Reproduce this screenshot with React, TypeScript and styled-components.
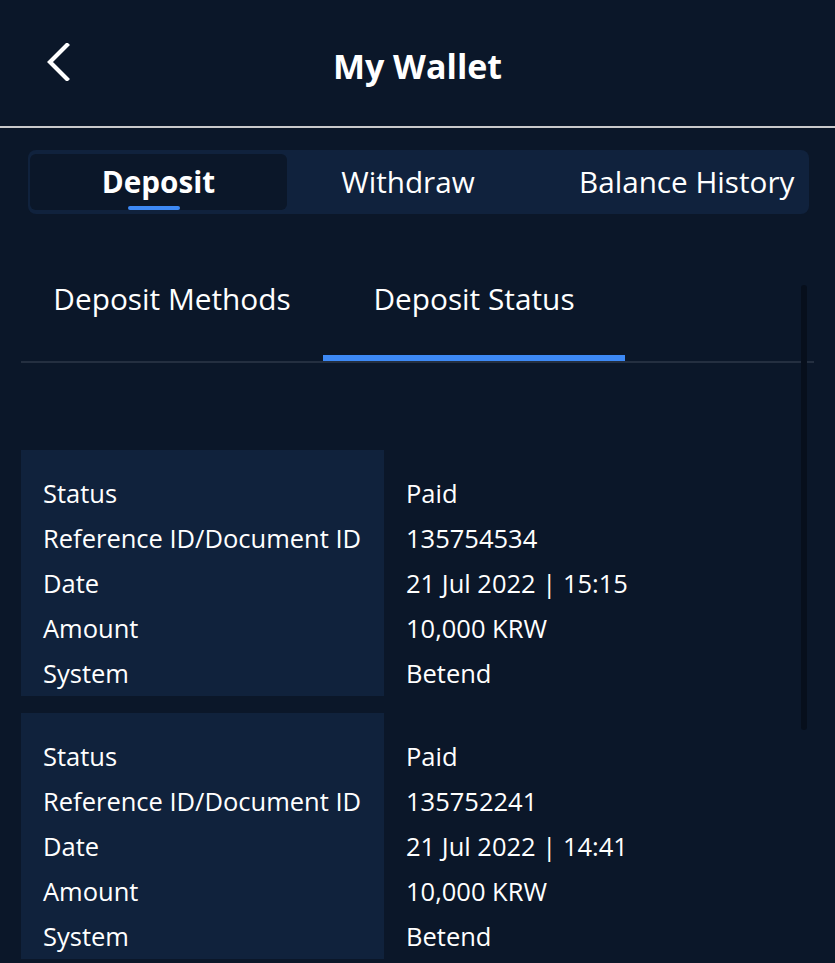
import React, {useState} from "react";
import styled, {createGlobalStyle} from "styled-components";

const GlobalStyle = createGlobalStyle`
    html, body {
        margin: 0;
        padding: 0;
        background-color: #0b1729;
    }
    body {
        font-family: "Open Sans", "Noto Sans", sans-serif;
        color: #ffffff;
    }
    * {
        box-sizing: border-box;
    }
`

type Deposit = {
    status: string
    reference: string
    date: string
    amount: string
    system: string
}

const deposits: Deposit[] = [
    {status: 'Paid', reference: '135754534', date: '21 Jul 2022 | 15:15', amount: '10,000 KRW', system: 'Betend'},
    {status: 'Paid', reference: '135752241', date: '21 Jul 2022 | 14:41', amount: '10,000 KRW', system: 'Betend'},
]

const labels = ['Status', 'Reference ID/Document ID', 'Date', 'Amount', 'System']

const App: React.FC = () => {
    const [mainTab, setMainTab] = useState('deposit')
    const [subTab, setSubTab] = useState('status')

    return (
        <Wrapper>
            <GlobalStyle/>
            <Header>
                <BackButton aria-label="back">
                    <svg width="24" height="38" viewBox="0 0 24 38" fill="none">
                        <polyline points="21,2 4,19 21,36" stroke="#ffffff" strokeWidth="4.2" strokeLinejoin="miter" strokeLinecap="square"/>
                    </svg>
                </BackButton>
                <Title>My Wallet</Title>
            </Header>
            <Divider/>
            <Segmented>
                <SegTab $active={mainTab === 'deposit'} onClick={() => setMainTab('deposit')}>Deposit</SegTab>
                <SegTab $active={mainTab === 'withdraw'} onClick={() => setMainTab('withdraw')}>Withdraw</SegTab>
                <SegTab $active={mainTab === 'history'} $offset={50} onClick={() => setMainTab('history')}>Balance History</SegTab>
            </Segmented>
            <Content>
                <ScrollThumb/>
                <SubTabs>
                    <SubTab $active={subTab === 'methods'} onClick={() => setSubTab('methods')}>Deposit Methods</SubTab>
                    <SubTab $active={subTab === 'status'} onClick={() => setSubTab('status')}>Deposit Status</SubTab>
                </SubTabs>
                <CardList>
                    {deposits.map((d) => (
                        <Card key={d.reference}>
                            <LabelCol>
                                {labels.map((l) => <Row key={l}>{l}</Row>)}
                            </LabelCol>
                            <ValueCol>
                                <Row>{d.status}</Row>
                                <Row>{d.reference}</Row>
                                <Row>{d.date}</Row>
                                <Row>{d.amount}</Row>
                                <Row>{d.system}</Row>
                            </ValueCol>
                        </Card>
                    ))}
                </CardList>
            </Content>
        </Wrapper>
    )
}

export default App

const Wrapper = styled.div`
    width: 835px;
    min-height: 963px;
    background-color: #0b1729;
`

const Header = styled.div`
    height: 126px;
    display: flex;
    align-items: center;
    justify-content: center;
    position: relative;
`

const BackButton = styled.button`
    position: absolute;
    left: 46px;
    top: 43px;
    padding: 0;
    border: none;
    background: none;
    display: flex;
    cursor: pointer;
`

const Title = styled.h1`
    margin: 5px 0 0 0;
    font-size: 34px;
    font-weight: 700;
    color: #ffffff;
`

const Divider = styled.div`
    height: 2px;
    background-color: #c9c9cb;
`

const Segmented = styled.div`
    margin: 22px 26px 0 28px;
    height: 64px;
    padding: 4px 2px;
    display: grid;
    grid-template-columns: 257px 242px 1fr;
    background-color: #10223d;
    border-radius: 8px;
`

const SegTab = styled.div<{$active: boolean, $offset?: number}>`
    position: relative;
    display: flex;
    align-items: center;
    justify-content: ${(p) => p.$offset ? 'flex-start' : 'center'};
    padding-left: ${(p) => p.$offset ? `${p.$offset}px` : '0'};
    padding-bottom: 2px;
    font-size: 29.7px;
    font-weight: ${(p) => p.$active ? 700 : 400};
    white-space: nowrap;
    border-radius: 6px;
    background-color: ${(p) => p.$active ? '#0b1729' : 'transparent'};
    cursor: pointer;
    &::after {
        content: '';
        display: ${(p) => p.$active ? 'block' : 'none'};
        position: absolute;
        left: 98px;
        bottom: 0;
        width: 52px;
        height: 4px;
        border-radius: 2px;
        background-color: #3d89f5;
    }
`

const Content = styled.div`
    position: relative;
    padding: 50px 21px 0 21px;
`

const ScrollThumb = styled.div`
    position: absolute;
    top: 71px;
    right: 28px;
    width: 6px;
    height: 445px;
    border-radius: 3px;
    background-color: #070f1c;
`

const SubTabs = styled.div`
    display: flex;
    border-bottom: 2px solid #242f40;
`

const SubTab = styled.div<{$active: boolean}>`
    width: 302px;
    height: 97px;
    padding-top: 15px;
    text-align: center;
    font-size: 29.8px;
    line-height: 40px;
    color: #ffffff;
    border-bottom: 6px solid ${(p) => p.$active ? '#3d89f5' : 'transparent'};
    cursor: pointer;
`

const CardList = styled.div`
    margin-top: 87px;
    display: flex;
    flex-direction: column;
    gap: 17px;
`

const Card = styled.div`
    display: flex;
`

const LabelCol = styled.div`
    width: 363px;
    padding: 21px 0 0 22px;
    background-color: #10223c;
`

const ValueCol = styled.div`
    flex: 1;
    padding: 21px 0 0 22px;
`

const Row = styled.div`
    height: 45px;
    line-height: 45px;
    font-size: 25.5px;
    color: #ffffff;
    white-space: nowrap;
`
